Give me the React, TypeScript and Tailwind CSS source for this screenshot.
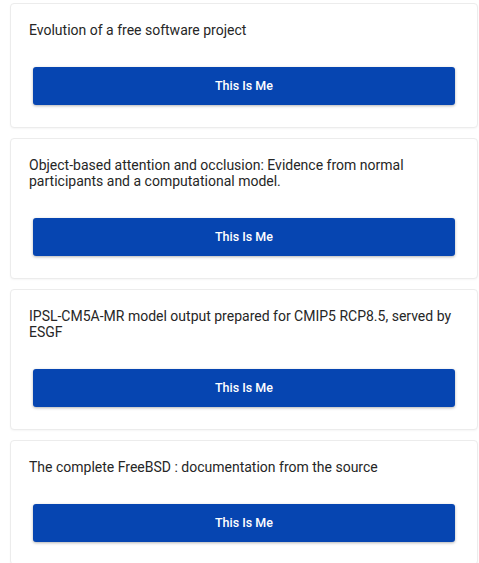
const works = [
  'Evolution of a free software project',
  'Object-based attention and occlusion: Evidence from normal participants and a computational model.',
  'IPSL-CM5A-MR model output prepared for CMIP5 RCP8.5, served by ESGF',
  'The complete FreeBSD : documentation from the source',
];

function WorkCard({ title }: { title: string }) {
  return (
    <div className="rounded-[4px] border border-[#ececec] bg-white px-[18px] pt-[18px] pb-[22px] shadow-[0_1px_2px_rgba(0,0,0,0.04)]">
      <p className="text-[14px] leading-[16px] text-[#262626]">{title}</p>
      <button
        type="button"
        className="mx-[4px] mt-[29px] flex h-[38px] w-[calc(100%-8px)] items-center justify-center rounded-[3px] bg-[#0645b1] text-[12.5px] font-medium text-white shadow-[0_1px_3px_rgba(0,0,0,0.3)]"
      >
        This Is Me
      </button>
    </div>
  );
}

export default function App() {
  return (
    <div
      className="min-h-screen bg-white pt-[3px] pl-[10px] pr-[1px]"
      style={{ fontFamily: 'Roboto, "Noto Sans", sans-serif' }}
    >
      <div className="flex flex-col gap-[10px]">
        {works.map((t) => (
          <WorkCard key={t} title={t} />
        ))}
      </div>
    </div>
  );
}
